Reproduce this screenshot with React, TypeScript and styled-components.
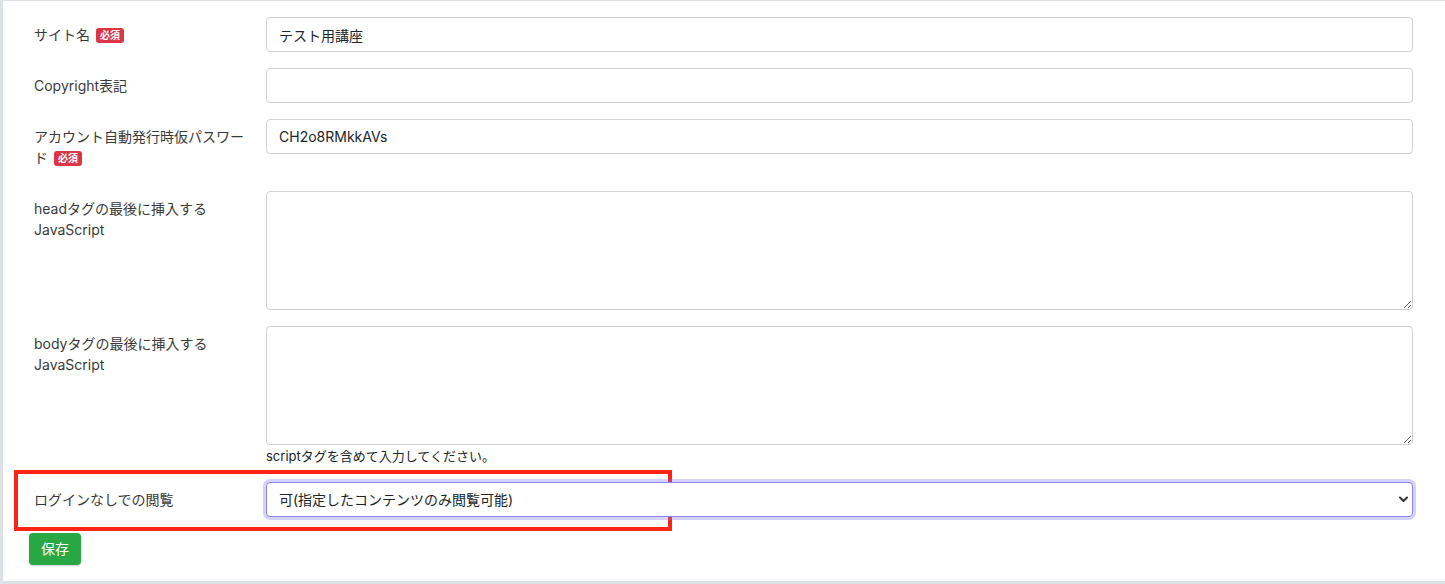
import React from "react";
import styled, { createGlobalStyle } from "styled-components";

const GlobalStyle = createGlobalStyle`
  html, body {
    margin: 0;
    padding: 0;
    background: #dee2e6;
    overflow: hidden;
  }
  body {
    font-family: Inter, "Noto Sans CJK JP", sans-serif;
    font-size: 14px;
    color: #212529;
  }
  * { box-sizing: border-box; }
`;

const Page = styled.div`
  width: 1445px;
  height: 584px;
  padding: 1px 0 0 3px;
`;

const Card = styled.div`
  background: #ffffff;
  width: 1442px;
  padding: 16px 32px 16px 31px;
`;

const FormRow = styled.div`
  position: relative;
  display: grid;
  grid-template-columns: 216px 1fr;
  column-gap: 16px;
  margin-bottom: 16px;
`;

const Label = styled.label`
  display: block;
  padding: 7px 0;
  line-height: 21px;
  font-size: 14px;
  color: #3a3a3a;
`;

const NoWrap = styled.span`
  white-space: nowrap;
`;

const Badge = styled.span`
  display: inline-block;
  margin-left: 6px;
  padding: 0 4px;
  height: 15px;
  line-height: 15px;
  font-size: 10px;
  font-weight: 700;
  color: #fff;
  background: #dc3545;
  border-radius: 3px;
  vertical-align: 1px;
`;

const Field = styled.div`
  display: flex;
  flex-direction: column;
  position: relative;
`;

const TextInput = styled.input`
  height: 35px;
  width: 100%;
  padding: 0 12px;
  font: inherit;
  font-size: 14px;
  color: #212529;
  background: #fff;
  border: 1px solid #ced4da;
  border-radius: 4px;
  outline: none;
`;

const TextArea = styled.textarea`
  height: 119px;
  width: 100%;
  padding: 6px 12px;
  font: inherit;
  font-size: 14px;
  color: #212529;
  background: #fff;
  border: 1px solid #ced4da;
  border-radius: 4px;
  outline: none;
  resize: vertical;
  display: block;
`;

const HelpText = styled.small`
  display: block;
  margin-top: 2px;
  font-size: 13px;
  line-height: 19px;
  color: #212529;
`;

const Select = styled.select`
  appearance: none;
  -webkit-appearance: none;
  height: 35px;
  width: 100%;
  padding: 0 32px 0 12px;
  font: inherit;
  font-size: 14px;
  color: #212529;
  background: #fff;
  border: 1px solid #8b87ea;
  border-radius: 4px;
  outline: none;
  box-shadow: 0 0 0 3px rgba(125, 118, 240, 0.32);
`;

const Chevron = styled.svg`
  position: absolute;
  right: 5px;
  top: 14px;
  width: 9px;
  height: 7px;
  pointer-events: none;
`;

const Highlight = styled.div`
  position: absolute;
  left: -20px;
  top: -12px;
  width: 658px;
  height: 61px;
  border: 4px solid #fa2516;
  pointer-events: none;
`;

const Footer = styled.div`
  margin-left: -5px;
`;

const SaveButton = styled.button`
  height: 32px;
  padding: 0 12px;
  font: inherit;
  font-size: 14px;
  line-height: 32px;
  color: #fff;
  background: #28a745;
  border: none;
  border-radius: 4px;
  box-shadow: 0 1px 2px rgba(0, 0, 0, 0.2);
  cursor: pointer;
`;

export default function App() {
  return (
    <Page>
      <GlobalStyle />
      <Card>
        <FormRow>
          <Label>
            サイト名<Badge>必須</Badge>
          </Label>
          <Field>
            <TextInput defaultValue="テスト用講座" />
          </Field>
        </FormRow>
        <FormRow>
          <Label>Copyright表記</Label>
          <Field>
            <TextInput defaultValue="" />
          </Field>
        </FormRow>
        <FormRow>
          <Label>
            <span>アカウント自動発行時仮パスワー</span>
            <NoWrap>
              ド<Badge>必須</Badge>
            </NoWrap>
          </Label>
          <Field>
            <TextInput defaultValue="CH2o8RMkkAVs" />
          </Field>
        </FormRow>
        <FormRow>
          <Label>headタグの最後に挿入するJavaScript</Label>
          <Field>
            <TextArea />
          </Field>
        </FormRow>
        <FormRow>
          <Label>bodyタグの最後に挿入するJavaScript</Label>
          <Field>
            <TextArea />
            <HelpText>scriptタグを含めて入力してください。</HelpText>
          </Field>
        </FormRow>
        <FormRow>
          <Highlight />
          <Label>ログインなしでの閲覧</Label>
          <Field>
            <Select defaultValue="1">
              <option value="1">可(指定したコンテンツのみ閲覧可能)</option>
              <option value="0">不可</option>
            </Select>
            <Chevron viewBox="0 0 9 7">
              <path d="M1 1.5 L4.5 5 L8 1.5" fill="none" stroke="#333" strokeWidth="2" strokeLinecap="round" strokeLinejoin="round" />
            </Chevron>
          </Field>
        </FormRow>
        <Footer>
          <SaveButton>保存</SaveButton>
        </Footer>
      </Card>
    </Page>
  );
}
